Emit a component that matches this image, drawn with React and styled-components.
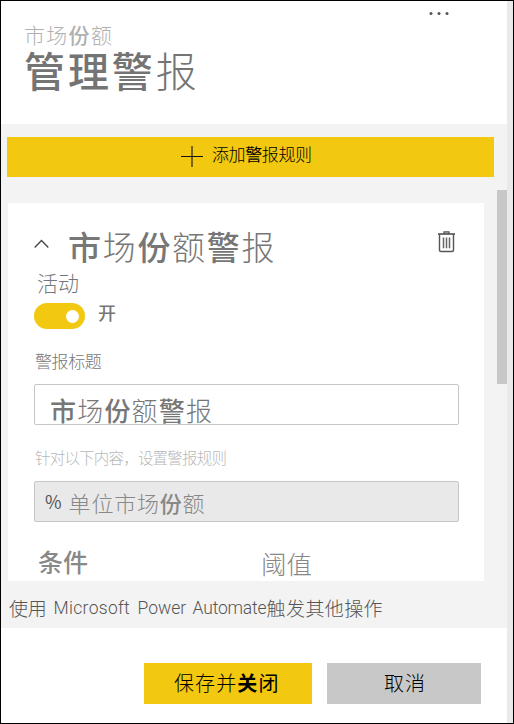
import React from 'react';
import styled, { createGlobalStyle } from 'styled-components';

const GlobalStyle = createGlobalStyle`
  *, *::before, *::after { box-sizing: border-box; }
  body { margin: 0; background: #fff; }
  button { border: 0; padding: 0; margin: 0; cursor: pointer; }
`;

const Window = styled.div`
  display: flex;
  width: 514px;
  height: 724px;
  border: 1px solid #000;
  background: #fff;
  overflow: hidden;
  font-family: "Noto Sans CJK SC", "Liberation Sans", sans-serif;
`;

const Panel = styled.main`
  display: flex;
  flex-direction: column;
  width: 506px;
`;

const PageEdge = styled.div`
  width: 6px;
  background: #eaeaea;
`;

const Text = styled.span`
  display: block;
  flex: none;
  white-space: nowrap;
  font-size: ${(p) => p.$size}px;
  line-height: ${(p) => p.$line || p.$size}px;
  letter-spacing: ${(p) => p.$spacing || 0}px;
  font-weight: ${(p) => p.$weight || 300};
  color: ${(p) => p.$color || '#777'};
`;

const Strong = styled.b`
  font-weight: ${(p) => p.$weight || 500};
`;

const Header = styled.header`
  display: flex;
  justify-content: space-between;
  height: 123px;
  padding: 23px 58px 0 23px;
`;

const Heading = styled.div`
  display: flex;
  flex-direction: column;
  gap: 4px;
`;

const MoreButton = styled.button`
  width: 20px;
  height: 6px;
  margin-top: -15px;
  background: none;
  svg { display: block; }
`;

const Body = styled.section`
  display: flex;
  height: 504px;
  flex-direction: column;
  background: #f3f3f3;
`;

const AddButton = styled.button`
  display: flex;
  align-items: flex-start;
  gap: 9px;
  width: 487px;
  height: 40px;
  margin: 13px 0 0 6px;
  padding: 8px 0 0 174px;
  background: #f2c811;
  font-family: inherit;
  svg { margin-top: 1px; }
`;

const ScrollArea = styled.div`
  display: flex;
  justify-content: space-between;
  height: 391px;
  margin-top: 13px;
  padding-left: 7px;
`;

const ScrollThumb = styled.div`
  width: 10px;
  height: 194px;
  background: #c8c8c8;
`;

const Card = styled.article`
  width: 476px;
  height: 378px;
  margin-top: 13px;
  padding: 27px 25px 0 26px;
  background: #fff;
`;

const CardHeader = styled.div`
  display: flex;
  height: 42px;
`;

const Chevron = styled.svg`
  margin: 8px 18px 0 0;
`;

const Trash = styled.svg`
  margin: 1px -1px 0 auto;
`;

const ToggleRow = styled.div`
  display: flex;
  align-items: flex-start;
  gap: 13px;
  margin-top: 10px;
`;

const Toggle = styled.button`
  display: flex;
  justify-content: flex-end;
  align-items: center;
  width: 51px;
  height: 26px;
  padding-right: 6px;
  border-radius: 13px;
  background: #f2c811;
  &::after {
    content: "";
    width: 13px;
    height: 13px;
    border-radius: 50%;
    background: #fff;
  }
`;

const Indent = styled.div`
  padding: ${(p) => p.$top || 0}px 0 0 ${(p) => p.$left || 0}px;
`;

const Field = styled.div`
  display: flex;
  gap: 7px;
  width: 425px;
  height: 41px;
  margin-top: ${(p) => p.$gap}px;
  padding: ${(p) => p.$padding};
  border: 1px solid #c6c6c6;
  border-radius: 2px;
  background: ${(p) => (p.$disabled ? '#e9e9e9' : '#fff')};
`;

const Columns = styled.div`
  display: grid;
  grid-template-columns: 223px 1fr;
  padding: 27px 0 0 4px;
`;

const FlowLink = styled.a`
  display: flex;
  padding: 17px 0 0 8px;
`;

const Latin = styled(Text)`
  width: ${(p) => p.$width}px;
  font-family: Roboto, "Liberation Sans", sans-serif;
`;

const Footer = styled.footer`
  display: flex;
  gap: 15px;
  padding: 35px 0 0 143px;
`;

const ActionButton = styled.button`
  display: flex;
  width: ${(p) => p.$width}px;
  height: 41px;
  padding: 10px 0 0 ${(p) => p.$inset}px;
  background: ${(p) => (p.$primary ? '#f2c811' : '#c8c8c8')};
  font-family: inherit;
`;

export default function App() {
  return (
    <>
      <GlobalStyle />
      <Window>
        <Panel>
          <Header>
            <Heading>
              <Text $size={21} $spacing={1.3} $color="#b0b0b0">市场<Strong>份</Strong>额</Text>
              <Text $size={41} $spacing={2.9} $color="#747474"><Strong>管理警</Strong>报</Text>
            </Heading>
            <MoreButton aria-label="更多">
              <svg width="20" height="6" fill="#555">
                <circle cx="2" cy="4.5" r="1.5" /><circle cx="10" cy="4.5" r="1.5" /><circle cx="18" cy="4.5" r="1.5" />
              </svg>
            </MoreButton>
          </Header>
          <Body>
            <AddButton>
              <svg width="22" height="22" fill="none">
                <path d="M11 0V21" stroke="#7a650a" strokeWidth="2" />
                <path d="M0 10.5H22" stroke="#111" />
              </svg>
              <Text $size={17} $spacing={-0.4} $color="#000">添加<Strong $weight={400}>警</Strong>报规则</Text>
            </AddButton>
            <ScrollArea>
              <Card>
                <CardHeader>
                  <Chevron width="16" height="12" fill="none" stroke="#444" strokeWidth="1.3">
                    <path d="M.7 9.5 7.5 2.5l6.8 7" />
                  </Chevron>
                  <Text $size={33} $spacing={1.7}><Strong>市</Strong>场<Strong>份</Strong>额<Strong>警</Strong>报</Text>
                  <Trash width="22" height="22" fill="none">
                    <path d="M6 3V.8h5V3" fill="#ccc" stroke="#555" strokeWidth="1.2" />
                    <path d="M0 3h17" stroke="#444" strokeWidth="1.5" />
                    <path d="M1.5 3v16q0 1.5 1.5 1.5h11q1.5 0 1.5-1.5V3" stroke="#555" strokeWidth="1.4" />
                    <path d="M5.5 6.5v10.7M8.5 6.5v10.7M11.5 6.5v10.7" stroke="#666" strokeWidth="1.5" />
                  </Trash>
                </CardHeader>
                <Indent $left={3}><Text $size={21}>活动</Text></Indent>
                <ToggleRow>
                  <Toggle role="switch" aria-checked="true" aria-label="活动" />
                  <Indent $top={0}><Text $size={18} $weight={500}>开</Text></Indent>
                </ToggleRow>
                <Indent $top={23} $left={1}><Text $size={17} $spacing={-0.4}>警报标题</Text></Indent>
                <Field $gap={15} $padding="12px 0 0 15px">
                  <Text $size={26} $spacing={1.2}><Strong>市</Strong>场<Strong>份</Strong>额<Strong>警</Strong>报</Text>
                </Field>
                <Indent $top={24} $left={1}><Text $size={15.5} $line={16} $spacing={-0.8} $color="#b8b8b8">针对以下内容，设置警报规则</Text></Indent>
                <Field $gap={16} $padding="9px 0 0 10px" $disabled>
                  <Text $size={18} $line={20} $weight={400} $color="#555">%</Text>
                  <Text $size={22} $spacing={0.8} $color="#888">单位市场<Strong>份</Strong>额</Text>
                </Field>
                <Columns>
                  <Text $size={25} $weight={500} $color="#888">条件</Text>
                  <Indent $top={1}><Text $size={25.5} $color="#888">阈值</Text></Indent>
                </Columns>
              </Card>
              <ScrollThumb />
            </ScrollArea>
            <FlowLink>
              <Text $size={19} $spacing={-0.2} $color="#555">使用</Text>
              <Indent $left={7}><Latin $size={17.5} $line={20} $spacing={0.3} $width={84} $color="#555">Microsoft</Latin></Indent>
              <Latin $size={17.5} $line={20} $width={55} $color="#555">Power</Latin>
              <Latin $size={17.5} $line={20} $spacing={-0.2} $width={74} $color="#555">Automate</Latin>
              <Text $size={19} $spacing={0.4} $color="#555">触发其他操作</Text>
            </FlowLink>
          </Body>
          <Footer>
            <ActionButton $primary $width={168} $inset={30}>
              <Text $size={20} $spacing={1.1} $color="#000">保存并<Strong $weight={700}>关</Strong><Strong $weight={400}>闭</Strong></Text>
            </ActionButton>
            <ActionButton $width={154} $inset={57}>
              <Text $size={20} $spacing={1} $color="#000">取消</Text>
            </ActionButton>
          </Footer>
        </Panel>
        <PageEdge />
      </Window>
    </>
  );
}
